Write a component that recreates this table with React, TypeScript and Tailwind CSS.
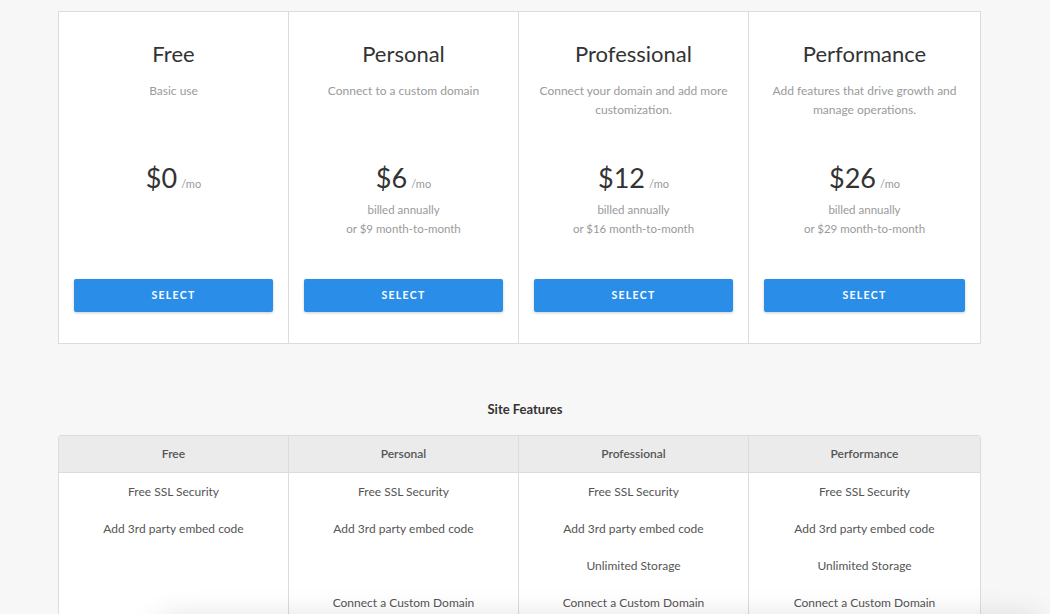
import React from "react";

const plans = [
  { name: "Free", desc: ["Basic use"], price: "$0", billed: null as null | string[] },
  { name: "Personal", desc: ["Connect to a custom domain"], price: "$6", billed: ["billed annually", "or $9 month-to-month"] },
  { name: "Professional", desc: ["Connect your domain and add more", "customization."], price: "$12", billed: ["billed annually", "or $16 month-to-month"] },
  { name: "Performance", desc: ["Add features that drive growth and", "manage operations."], price: "$26", billed: ["billed annually", "or $29 month-to-month"] },
];

const features: (string | null)[][] = [
  ["Free SSL Security", "Add 3rd party embed code", null, null],
  ["Free SSL Security", "Add 3rd party embed code", null, "Connect a Custom Domain"],
  ["Free SSL Security", "Add 3rd party embed code", "Unlimited Storage", "Connect a Custom Domain"],
  ["Free SSL Security", "Add 3rd party embed code", "Unlimited Storage", "Connect a Custom Domain"],
];

export default function App() {
  return (
    <div
      className="relative h-[614px] w-[1050px] overflow-hidden bg-[#f7f7f7]"
      style={{ fontFamily: "Lato, 'Open Sans', sans-serif" }}
    >
      <div className="ml-[58px] mt-[11px] grid w-[923px] grid-cols-[229px_230px_230px_1fr] border border-[#dcdcdc] bg-white">
        {plans.map((p, i) => (
          <div
            key={p.name}
            className={`flex flex-col items-center px-[15px] pt-[28px] pb-[31px] text-center ${i > 0 ? "border-l border-[#dcdcdc]" : ""}`}
          >
            <div className="h-[28px] text-[22px] leading-[28px] text-[#333]">{p.name}</div>
            <div className="mt-[13px] h-[79px] text-[12px] leading-[19px] text-[#9a9a9a]">
              {p.desc.map((d) => (
                <div key={d}>{d}</div>
              ))}
            </div>
            <div className="flex h-[36px] items-baseline leading-[36px]">
              <span className="text-[27px] text-[#333]">{p.price}</span>
              <span className="ml-[4px] text-[11px] text-[#9a9a9a]">/mo</span>
            </div>
            <div className="mt-[4px] h-[38px] text-[11.5px] leading-[19px] text-[#9a9a9a]">
              {p.billed && p.billed.map((b) => <div key={b}>{b}</div>)}
            </div>
            <button className="mt-[41px] h-[33px] w-full shrink-0 rounded-[2px] bg-[#2a8ee8] text-[10.5px] font-bold tracking-[0.12em] text-white shadow-[0_1px_3px_rgba(0,0,0,0.2)]">
              SELECT
            </button>
          </div>
        ))}
      </div>

      <div className="mt-[55px] h-[20px] text-center text-[13px] font-bold leading-[20px] text-[#333]">
        Site Features
      </div>

      <div className="ml-[58px] mt-[16px] grid w-[923px] grid-cols-[229px_230px_230px_1fr] rounded-t-[3px] border border-[#dcdcdc] bg-white">
        {plans.map((p, i) => (
          <div key={p.name} className={`flex flex-col ${i > 0 ? "border-l border-[#dcdcdc]" : ""}`}>
            <div className="h-[37px] border-b border-[#dcdcdc] bg-[#ebebec] text-center text-[12px] font-semibold leading-[36px] text-[#555]">
              {p.name}
            </div>
            {features[i].map((f, j) => (
              <div key={j} className="h-[37px] text-center text-[12px] leading-[37px] text-[#555]">
                {f ?? ""}
              </div>
            ))}
            <div className="h-[80px]" />
          </div>
        ))}
      </div>

      <div className="pointer-events-none absolute left-[150px] top-[624px] h-[60px] w-[900px] rounded-[30px] bg-white shadow-[0_-8px_30px_rgba(0,0,0,0.12)]" />
    </div>
  );
}
